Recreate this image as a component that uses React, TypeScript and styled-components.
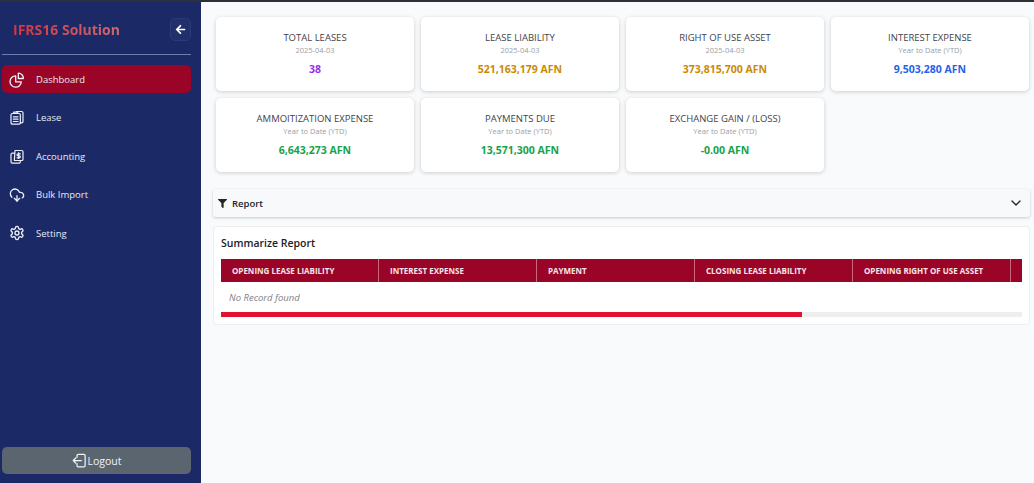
import { FC, ReactNode } from "react";
import styled, { createGlobalStyle } from "styled-components";
import { FaArrowLeft, FaFilter } from "react-icons/fa";
import { LuChevronDown, LuCloudDownload, LuSettings } from "react-icons/lu";

const GlobalStyle = createGlobalStyle`
  html, body { margin: 0; padding: 0; height: 100%; }
  body { font-family: "Open Sans", "Noto Sans", "Liberation Sans", sans-serif; background: #f8fafc; overflow: hidden; }
  * { box-sizing: border-box; }
`;

const Page = styled.div`
  width: 1034px;
  height: 483px;
  display: flex;
  flex-direction: column;
  overflow: hidden;
`;
const TopStrip = styled.div`
  height: 2px;
  flex: none;
  background: #2b3138;
`;
const Body = styled.div`
  flex: 1;
  display: flex;
  min-height: 0;
`;

const Sidebar = styled.aside`
  width: 201px;
  flex: none;
  background: #1b2a66;
  display: flex;
  flex-direction: column;
  padding: 0 10px 9px 2px;
`;
const Brand = styled.div`
  height: 53px;
  flex: none;
  display: flex;
  align-items: center;
  justify-content: space-between;
  padding-left: 11px;
  padding-top: 2px;
  border-bottom: 1px solid #6f7eb0;
`;
const BrandName = styled.div`
  font-size: 14px;
  font-weight: 700;
  background: linear-gradient(90deg, #d8323f, #c96a70);
  -webkit-background-clip: text;
  background-clip: text;
  color: transparent;
`;
const Collapse = styled.button`
  width: 21px;
  height: 23px;
  padding: 0;
  border: 1px solid #2b3a78;
  border-radius: 5px;
  background: #222f6d;
  color: #fff;
  display: flex;
  align-items: center;
  justify-content: center;
  font-size: 11px;
`;
const Nav = styled.nav`
  flex: 1;
  display: flex;
  flex-direction: column;
  gap: 10.5px;
  padding-top: 10px;
`;
const NavItem = styled.a<{ $active?: boolean }>`
  height: 28px;
  display: flex;
  align-items: center;
  gap: 11px;
  padding-left: 7px;
  border-radius: 5px;
  font-size: 9.5px;
  color: #e6e9f5;
  background: ${(p) => (p.$active ? "#9a0527" : "transparent")};
`;
const NavIcon = styled.span`
  width: 16px;
  height: 16px;
  flex: none;
  display: flex;
  align-items: center;
  justify-content: center;
  color: #eef0f8;
  font-size: 16px;
`;
const LogoutButton = styled.button`
  height: 27px;
  flex: none;
  border: none;
  border-radius: 5px;
  background: #5a656f;
  color: #f1f3f5;
  font-family: inherit;
  font-size: 10.5px;
  display: flex;
  align-items: center;
  justify-content: center;
  gap: 1px;
`;

const Main = styled.main`
  flex: 1;
  min-width: 0;
  padding: 15px 4px 0 12px;
  display: flex;
  flex-direction: column;
`;
const CardGrid = styled.section`
  display: grid;
  grid-template-columns: repeat(4, 198px);
  gap: 7px;
  padding-left: 3px;
`;
const Card = styled.div`
  height: 74px;
  background: #fff;
  border-radius: 5px;
  box-shadow: 0 1px 4px rgba(0, 0, 0, 0.18);
  display: flex;
  flex-direction: column;
  align-items: center;
  padding-top: 14px;
`;
const CardTitle = styled.div`
  font-size: 9.5px;
  line-height: 14px;
  color: #3f444b;
`;
const CardSub = styled.div`
  font-size: 7.5px;
  line-height: 11px;
  color: #9a9ea5;
`;
const CardValue = styled.div<{ $color: string }>`
  margin-top: 6px;
  font-size: 10.5px;
  line-height: 15px;
  font-weight: 700;
  color: ${(p) => p.$color};
`;

const FilterBar = styled.div`
  margin-top: 17px;
  height: 28px;
  flex: none;
  background: #f8f9fb;
  border-radius: 3px;
  box-shadow: 0 1px 3px rgba(0, 0, 0, 0.2);
  display: flex;
  align-items: center;
  padding: 0 6px 0 5px;
  color: #212529;
`;
const FilterLabel = styled.span`
  font-size: 9.5px;
  font-weight: 600;
  margin-left: 5px;
  flex: 1;
`;
const SummaryCard = styled.section`
  margin-top: 9px;
  height: 99px;
  flex: none;
  background: #fff;
  border: 1px solid #eceef1;
  border-radius: 4px;
  padding: 9px 7px 0 7px;
`;
const SummaryTitle = styled.h2`
  margin: 0 0 8px;
  font-size: 10.5px;
  line-height: 15px;
  font-weight: 600;
  color: #1d2125;
`;
const TableWrap = styled.div`
  overflow: hidden;
`;
const HeaderRow = styled.div`
  height: 23px;
  width: 1000px;
  display: grid;
  grid-template-columns: repeat(6, 158px);
  background: #9a0527;
`;
const HeaderCell = styled.div`
  display: flex;
  align-items: center;
  padding-left: 11px;
  font-size: 8px;
  font-weight: 700;
  color: #f5e6ea;
  white-space: nowrap;
  border-right: 1px solid #c9697f;
`;
const EmptyRow = styled.div`
  height: 30px;
  display: flex;
  align-items: center;
  padding-left: 8px;
  font-size: 9.5px;
  font-style: italic;
  color: #7d8187;
`;
const Track = styled.div`
  height: 5px;
  background: #eeeeef;
  box-shadow: 0 1px 2px rgba(0, 0, 0, 0.15);
`;
const Thumb = styled.div`
  height: 100%;
  background: #e0142c;
`;

const PieIcon: FC = () => (
  <svg width="17" height="17" viewBox="0 0 24 24" fill="none" stroke="currentColor" strokeWidth="2" strokeLinecap="round" strokeLinejoin="round">
    <path d="M10 6.5a8.5 8.5 0 1 0 8.5 9H10z" />
    <path d="M14 2.5a7.5 7.5 0 0 1 7.5 8H14z" />
  </svg>
);
const LeaseIcon: FC = () => (
  <svg width="17" height="17" viewBox="0 0 24 24" fill="none" stroke="currentColor" strokeWidth="1.8" strokeLinecap="round" strokeLinejoin="round">
    <rect x="3" y="6" width="14" height="16" rx="2" />
    <path d="M7 6V4h6v2" />
    <path d="M11 3h8a2 2 0 0 1 2 2v13a2 2 0 0 1-2 2h-2" />
    <path d="M6.5 11h7M6.5 14.500h7M6.500 18h7" />
  </svg>
);
const AccountingIcon: FC = () => (
  <svg width="17" height="17" viewBox="0 0 24 24" fill="none" stroke="currentColor" strokeWidth="1.8" strokeLinecap="round" strokeLinejoin="round">
    <path d="M8 7H5a2 2 0 0 0-2 2v11a2 2 0 0 0 2 2h10a2 2 0 0 0 2-2v-2" />
    <path d="M9 3h10a2 2 0 0 1 2 2v11a2 2 0 0 1-2 2H8z" />
    <path d="M14.500 6v9M17 8h-3.500a1.500 1.500 0 0 0 0 3h2a1.500 1.500 0 0 1 0 3H12" />
  </svg>
);
const LogoutIcon: FC = () => (
  <svg width="15" height="15" viewBox="0 0 24 24" fill="none" stroke="currentColor" strokeWidth="2" strokeLinecap="round" strokeLinejoin="round">
    <path d="M8 7V4a2 2 0 0 1 2-2h9a2 2 0 0 1 2 2v16a2 2 0 0 1-2 2h-9a2 2 0 0 1-2-2v-3" />
    <path d="M15 12H2M6 8l-4 4 4 4" />
  </svg>
);

interface IStat {
  title: string;
  sub: string;
  value: string;
  color: string;
}

const stats: IStat[] = [
  { title: "TOTAL LEASES", sub: "2025-04-03", value: "38", color: "#9333ea" },
  { title: "LEASE LIABILITY", sub: "2025-04-03", value: "521,163,179 AFN", color: "#ca8a04" },
  { title: "RIGHT OF USE ASSET", sub: "2025-04-03", value: "373,815,700 AFN", color: "#ca8a04" },
  { title: "INTEREST EXPENSE", sub: "Year to Date (YTD)", value: "9,503,280 AFN", color: "#2563eb" },
  { title: "AMMOITIZATION EXPENSE", sub: "Year to Date (YTD)", value: "6,643,273 AFN", color: "#16a34a" },
  { title: "PAYMENTS DUE", sub: "Year to Date (YTD)", value: "13,571,300 AFN", color: "#16a34a" },
  { title: "EXCHANGE GAIN / (LOSS)", sub: "Year to Date (YTD)", value: "-0.00 AFN", color: "#16a34a" },
];

const menu: { label: string; icon: ReactNode; active?: boolean }[] = [
  { label: "Dashboard", icon: <PieIcon />, active: true },
  { label: "Lease", icon: <LeaseIcon /> },
  { label: "Accounting", icon: <AccountingIcon /> },
  { label: "Bulk Import", icon: <LuCloudDownload /> },
  { label: "Setting", icon: <LuSettings /> },
];

const columns = [
  "OPENING LEASE LIABILITY",
  "INTEREST EXPENSE",
  "PAYMENT",
  "CLOSING LEASE LIABILITY",
  "OPENING RIGHT OF USE ASSET",
  "AMORTIZATION",
];

const App: FC = () => {
  return (
    <Page>
      <GlobalStyle />
      <TopStrip />
      <Body>
        <Sidebar>
          <Brand>
            <BrandName>IFRS16 Solution</BrandName>
            <Collapse>
              <FaArrowLeft />
            </Collapse>
          </Brand>
          <Nav>
            {menu.map((m) => (
              <NavItem key={m.label} $active={m.active}>
                <NavIcon>{m.icon}</NavIcon>
                {m.label}
              </NavItem>
            ))}
          </Nav>
          <LogoutButton>
            <LogoutIcon />
            Logout
          </LogoutButton>
        </Sidebar>
        <Main>
          <CardGrid>
            {stats.map((s) => (
              <Card key={s.title}>
                <CardTitle>{s.title}</CardTitle>
                <CardSub>{s.sub}</CardSub>
                <CardValue $color={s.color}>{s.value}</CardValue>
              </Card>
            ))}
          </CardGrid>
          <FilterBar>
            <FaFilter size={9} />
            <FilterLabel>Report</FilterLabel>
            <LuChevronDown size={16} />
          </FilterBar>
          <SummaryCard>
            <SummaryTitle>Summarize Report</SummaryTitle>
            <TableWrap>
              <HeaderRow>
                {columns.map((c) => (
                  <HeaderCell key={c}>{c}</HeaderCell>
                ))}
              </HeaderRow>
              <EmptyRow>No Record found</EmptyRow>
              <Track>
                <Thumb style={{ width: `${(582 / 802) * 100}%` }} />
              </Track>
            </TableWrap>
          </SummaryCard>
        </Main>
      </Body>
    </Page>
  );
};

export default App;
